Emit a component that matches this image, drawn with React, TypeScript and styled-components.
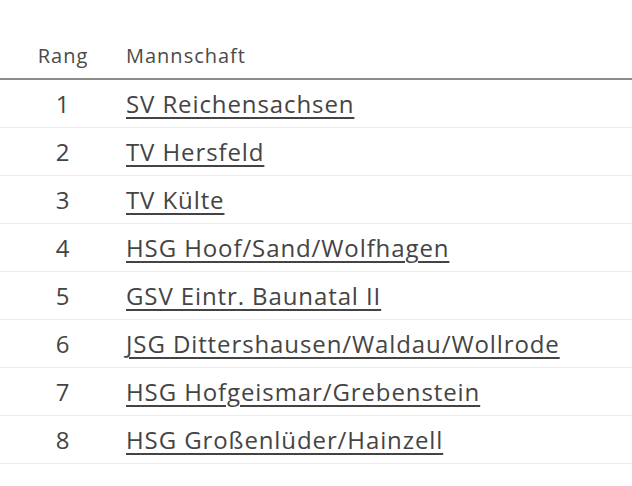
import React from 'react'
import styled, { createGlobalStyle } from 'styled-components'

const GlobalStyle = createGlobalStyle`
  html, body {
    margin: 0;
    padding: 0;
    background: #fff;
  }
  body {
    font-family: 'Open Sans', 'Liberation Sans', sans-serif;
    color: #444;
  }
`

const Wrapper = styled.div`
  padding-top: 32px;
`
const Table = styled.div`
  display: grid;
  grid-template-columns: 126px 1fr;
`
const HeadCell = styled.div<{ $center?: boolean }>`
  height: 46px;
  display: flex;
  align-items: center;
  justify-content: ${(p) => (p.$center ? 'center' : 'flex-start')};
  font-size: 20px;
  letter-spacing: 1px;
  color: #4a4a4a;
  border-bottom: 2px solid #8c8c8c;
`
const Cell = styled.div<{ $center?: boolean }>`
  height: 47px;
  display: flex;
  align-items: center;
  justify-content: ${(p) => (p.$center ? 'center' : 'flex-start')};
  font-size: 24px;
  letter-spacing: 0.9px;
  border-bottom: 1px solid #ececec;
`
const TeamLink = styled.a`
  color: #444;
  text-decoration: underline;
  text-decoration-thickness: 2px;
  text-underline-offset: 4px;
`

const teams = [
  'SV Reichensachsen',
  'TV Hersfeld',
  'TV Külte',
  'HSG Hoof/Sand/Wolfhagen',
  'GSV Eintr. Baunatal II',
  'JSG Dittershausen/Waldau/Wollrode',
  'HSG Hofgeismar/Grebenstein',
  'HSG Großenlüder/Hainzell',
]

const App: React.FC = () => {
  return (
    <Wrapper>
      <GlobalStyle />
      <Table>
        <HeadCell $center>Rang</HeadCell>
        <HeadCell>Mannschaft</HeadCell>
        {teams.map((team, i) => (
          <React.Fragment key={team}>
            <Cell $center>{i + 1}</Cell>
            <Cell>
              <TeamLink href="#">{team}</TeamLink>
            </Cell>
          </React.Fragment>
        ))}
      </Table>
    </Wrapper>
  )
}

export default App
